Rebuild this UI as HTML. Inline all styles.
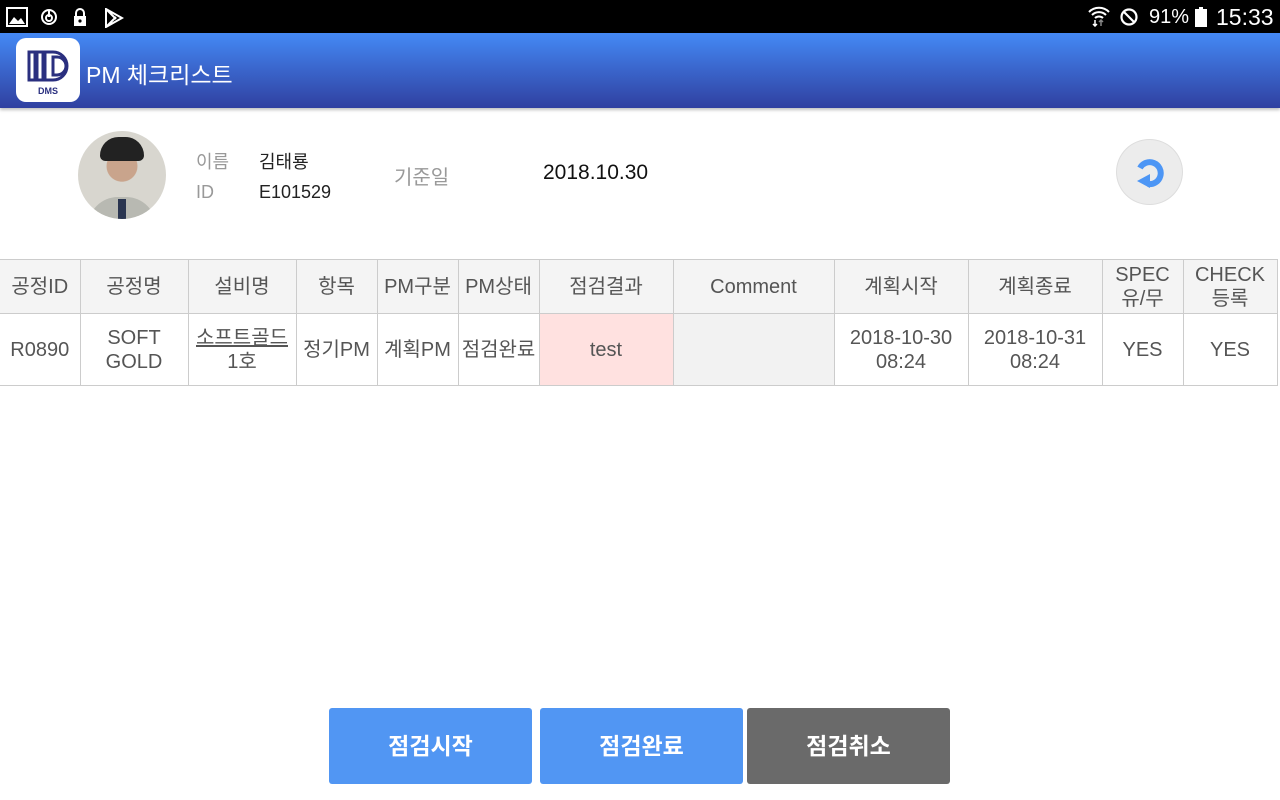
<!DOCTYPE html>
<html><head><meta charset="utf-8"><style>
*{margin:0;padding:0;box-sizing:border-box}
body{width:1280px;height:800px;overflow:hidden;background:#fff;font-family:"Liberation Sans","Noto Sans CJK KR",sans-serif;position:relative}
.sb{position:absolute;left:0;top:0;width:1280px;height:33px;background:#000;color:#fff}
.ab{position:absolute;left:0;top:33px;width:1280px;height:75px;background:linear-gradient(#4489f5,#3040a0);box-shadow:0 2px 3px rgba(0,0,0,.25)}
.logo{position:absolute;left:16px;top:5px;width:64px;height:64px;background:#fff;border-radius:10px}
.title{position:absolute;left:86px;top:23px;color:#fff;font-size:23px}
.abs{position:absolute}
table{position:absolute;left:0;top:259px;border-collapse:collapse;table-layout:fixed;width:1277px}
td{border:1px solid #ccc;text-align:center;color:#555;font-size:20px;line-height:24px;padding:0}
tr.h td{background:#f4f4f4;height:54px}
tr.d td{height:72px;color:#555}
tr td:first-child{border-left:none}
.btn{position:absolute;top:708px;height:76px;border-radius:3px;color:#fff;font-size:23px;font-weight:bold;text-align:center;line-height:76px}
</style></head><body>
<div class="sb">
<svg class="abs" style="left:6px;top:7px" width="22" height="20" viewBox="0 0 22 20"><rect x="1" y="1" width="20" height="18" fill="none" stroke="#fff" stroke-width="2"/><path d="M3 17 L8 10 L12 14 L15 11 L19 17Z" fill="#fff"/></svg>
<svg class="abs" style="left:40px;top:8px" width="18" height="18" viewBox="0 0 18 18"><circle cx="9" cy="9" r="7" fill="none" stroke="#fff" stroke-width="2"/><circle cx="9" cy="10" r="3" fill="none" stroke="#fff" stroke-width="2"/><path d="M9 3v6" stroke="#fff" stroke-width="2"/></svg>
<svg class="abs" style="left:72px;top:7px" width="16" height="20" viewBox="0 0 16 20"><path d="M4 9V6a4 4 0 0 1 8 0v3" fill="none" stroke="#fff" stroke-width="2"/><rect x="2" y="9" width="12" height="10" fill="#fff"/><circle cx="8" cy="14" r="1.6" fill="#000"/></svg>
<svg class="abs" style="left:104px;top:8px" width="20" height="20" viewBox="0 0 20 20"><path d="M2 1 L18 10 L2 19Z M2 1 L12 11 M2 19 L12 9" fill="none" stroke="#fff" stroke-width="2"/></svg>
<svg class="abs" style="left:1087px;top:5px" width="24" height="22" viewBox="0 0 24 22"><path d="M2 7a14 14 0 0 1 20 0M5 10a10 10 0 0 1 14 0M8 13a6 6 0 0 1 8 0" fill="none" stroke="#fff" stroke-width="2"/><path d="M8 15v6M6 19l2 2 2-2" stroke="#fff" fill="none" stroke-width="1.5"/><path d="M14 21v-6M12 17l2-2 2 2" stroke="#888" fill="none" stroke-width="1.5"/></svg>
<svg class="abs" style="left:1119px;top:7px" width="20" height="20" viewBox="0 0 20 20"><circle cx="10" cy="10" r="7.5" fill="none" stroke="#fff" stroke-width="2.2"/><path d="M5 5l10 10" stroke="#fff" stroke-width="2.2"/></svg>
<div class="abs" style="left:1149px;top:6px;font-size:20px">91%</div>
<div class="abs" style="left:1195px;top:9px;width:12px;height:18px;background:#fff"></div>
<div class="abs" style="left:1199px;top:7px;width:4px;height:2px;background:#fff"></div>
<div class="abs" style="left:1216px;top:4px;font-size:23px">15:33</div>
</div>
<div class="ab">
<div class="logo"><svg width="64" height="64" viewBox="0 0 64 64"><g fill="none" stroke="#2a2f7f" stroke-width="3"><path d="M13 14h6v28h-6z M21 14h6v28h-6z"/><path d="M29 14h8a14 14 0 0 1 0 28h-8z"/><path d="M37 19h4a9 9 0 0 1 0 18h-4z" /></g><text x="32" y="56" font-size="9" text-anchor="middle" fill="#2a2f7f" font-family="Liberation Sans" font-weight="bold">DMS</text></svg></div>
<div class="title">PM 체크리스트</div>
</div>
<div class="abs" style="left:78px;top:131px;width:88px;height:88px;border-radius:50%;background:radial-gradient(circle at 50% 40%,#c9a48c 0 22%,#d8d6cf 23%);overflow:hidden">
<div class="abs" style="left:22px;top:6px;width:44px;height:24px;background:#222;border-radius:20px 20px 6px 6px"></div>
<div class="abs" style="left:10px;top:66px;width:68px;height:30px;background:#b8b9b2;border-radius:30px 30px 0 0"></div>
<div class="abs" style="left:40px;top:68px;width:8px;height:20px;background:#2a3550"></div>
</div>
<div class="abs" style="left:196px;top:148px;font-size:18px;color:#999">이름</div>
<div class="abs" style="left:259px;top:148px;font-size:18px;color:#222">김태룡</div>
<div class="abs" style="left:196px;top:182px;font-size:18px;color:#999">ID</div>
<div class="abs" style="left:259px;top:182px;font-size:18px;color:#222">E101529</div>
<div class="abs" style="left:394px;top:161px;font-size:20px;color:#999">기준일</div>
<div class="abs" style="left:543px;top:161px;font-size:21px;color:#111">2018.10.30</div>
<div class="abs" style="left:1116px;top:139px;width:67px;height:66px;border-radius:50%;background:#ececec;border:1px solid #ddd"></div>
<svg class="abs" style="left:1128px;top:150px" width="44" height="44" viewBox="0 0 44 44"><path d="M12 18a11 11 0 1 1 8 16" fill="none" stroke="#4d96f5" stroke-width="6"/><path d="M9 31l13-7v14z" fill="#4d96f5"/></svg>
<table>
<colgroup><col style="width:80px"><col style="width:108px"><col style="width:108px"><col style="width:81px"><col style="width:81px"><col style="width:81px"><col style="width:134px"><col style="width:161px"><col style="width:134px"><col style="width:134px"><col style="width:81px"><col style="width:94px"></colgroup>
<tr class="h"><td>공정ID</td><td>공정명</td><td>설비명</td><td>항목</td><td>PM구분</td><td>PM상태</td><td>점검결과</td><td>Comment</td><td>계획시작</td><td>계획종료</td><td>SPEC<br>유/무</td><td>CHECK<br>등록</td></tr>
<tr class="d"><td>R0890</td><td>SOFT<br>GOLD</td><td><u>소프트골드</u><br>1호</td><td>정기PM</td><td>계획PM</td><td>점검완료</td><td style="background:#ffe1e0">test</td><td style="background:#f2f2f2"></td><td>2018-10-30<br>08:24</td><td>2018-10-31<br>08:24</td><td>YES</td><td>YES</td></tr>
</table>
<div class="btn" style="left:329px;width:203px;background:#5196f3">점검시작</div>
<div class="btn" style="left:540px;width:203px;background:#5196f3">점검완료</div>
<div class="btn" style="left:747px;width:203px;background:#6a6a6a">점검취소</div>
</body></html>
